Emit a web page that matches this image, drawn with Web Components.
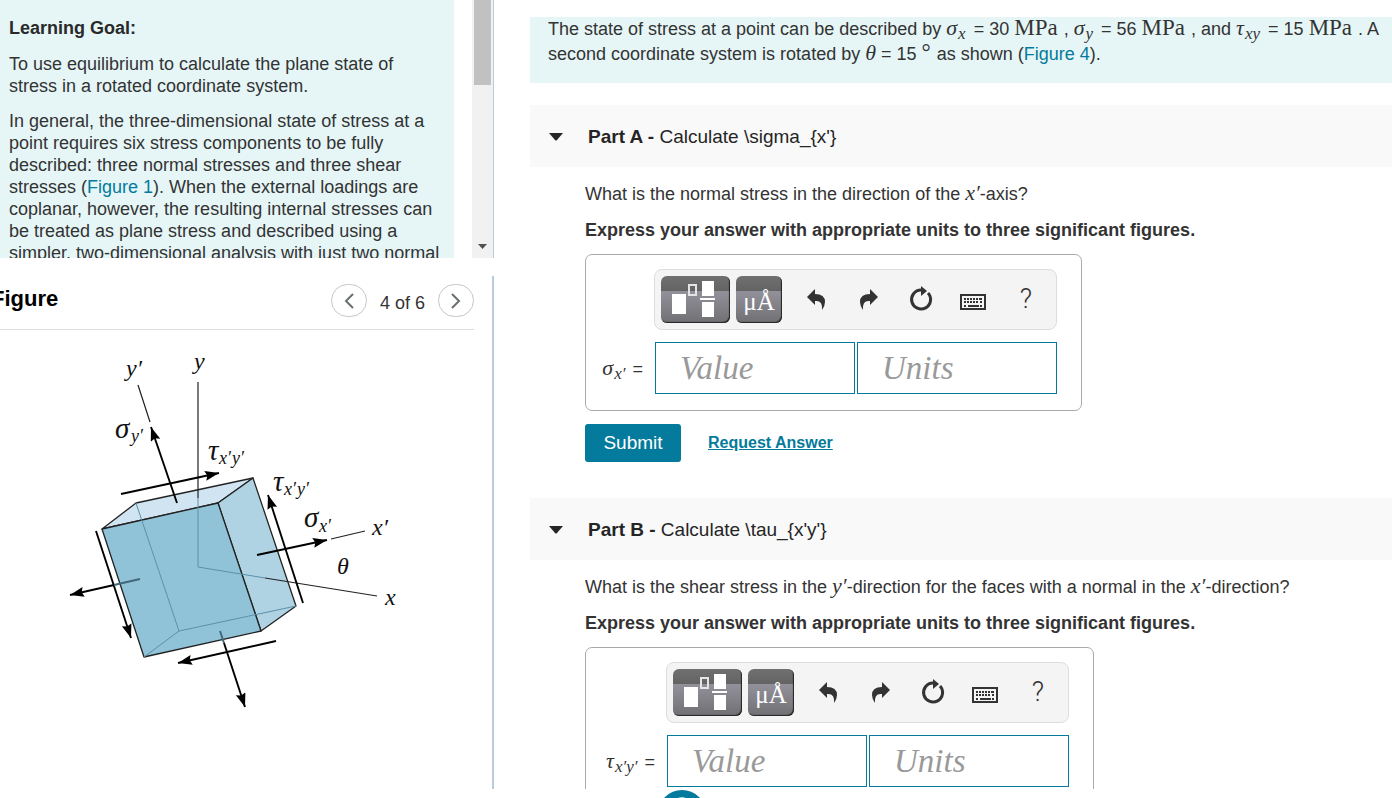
<!DOCTYPE html>
<html lang="en">
<head>
<meta charset="utf-8">
<title>Plane stress transformation</title>
<style>
    html, body { height: 100%; }
    body {
        margin: 0;
        overflow: hidden;
        background: #fff;
        color: #333;
        font: 18px/22px "Liberation Sans", Arial, sans-serif;
    }
    b { color: #2a2a2a; }
    a { color: #047a9c; text-decoration: none; }
    p { margin: 0 0 13px; }
    p:first-child { margin-bottom: 14px; }
</style>
</head>
<body>
<app-layout>
    <side-panel slot="side">
        <learning-goal>
            <p><b>Learning Goal:</b></p>
            <p>To use equilibrium to calculate the plane state of stress in a rotated coordinate system.</p>
            <p>In general, the three-dimensional state of stress at a point requires six stress components to be fully described: three normal stresses and three shear stresses (<a href="#fig1">Figure 1</a>). When the external loadings are coplanar, however, the resulting internal stresses can be treated as plane stress and described using a simpler, two-dimensional analysis with just two normal</p>
        </learning-goal>
        <figure-viewer current="4" total="6"><stress-figure></stress-figure></figure-viewer>
    </side-panel>

    <problem-intro>The state of stress at a point can be described by <math-var base="σ" sub="x"></math-var> = 30 <math-unit>MPa</math-unit> , <math-var base="σ" sub="y"></math-var> = 56 <math-unit>MPa</math-unit> , and <math-var base="τ" sub="xy"></math-var> = 15 <math-unit>MPa</math-unit> . A second coordinate system is rotated by <math-var base="θ"></math-var> = 15 <math-unit>°</math-unit> as shown (<a href="#fig4">Figure 4</a>).</problem-intro>

    <problem-part name="Part A" topic="Calculate \sigma_{x'}">
        <span slot="question">What is the normal stress in the direction of the <math-var base="x′"></math-var>-axis?</span>
        <answer-box slot="answer" base="σ" sub="x′" style="--label-width: 53px"></answer-box>
    </problem-part>
    <problem-part name="Part B" topic="Calculate \tau_{x'y'}">
        <span slot="question">What is the shear stress in the <math-var base="y′"></math-var>-direction for the faces with a normal in the <math-var base="x′"></math-var>-direction?</span>
        <answer-box slot="answer" base="τ" sub="x′y′" style="--label-width: 65px"></answer-box>
    </problem-part>
</app-layout>

<script>
// small helper so every element gets its own open root
function attach(el, html) {
    el.attachShadow({ mode: "open" }).innerHTML = html;
}

class AppLayout extends HTMLElement {
    connectedCallback() {
        attach(this, `
            <style>
                :host {
                    display: grid;
                    grid-template-columns: 494px minmax(0, 1fr);
                    height: 100%;
                    position: relative;
                    overflow: hidden;
                }
                aside, main { margin-bottom: 9px; overflow: hidden; min-height: 0; }
                main { padding: 17px 0 0 36px; }
                .brand {
                    position: absolute;
                    left: 49%;
                    top: calc(100% - 8px);
                    margin-left: -24px;
                    display: block;
                }
            </style>
            <aside><slot name="side"></slot></aside>
            <main><slot></slot></main>
            <svg class="brand" width="48" height="48" viewBox="0 0 48 48" aria-hidden="true">
                <circle cx="24" cy="24" r="24" fill="#047a9c"/>
                <path d="M18 40V10q12-4 14 6t-13 12" fill="none" stroke="#fff" stroke-width="3"/>
            </svg>
        `);
    }
}

class SidePanel extends HTMLElement {
    connectedCallback() {
        attach(this, `
            <style>
                :host { display: flex; flex-direction: column; height: 100%; }
            </style>
            <slot></slot>
        `);
    }
}

class LearningGoal extends HTMLElement {
    connectedCallback() {
        attach(this, `
            <style>
                :host {
                    display: flex;
                    flex: none;
                    height: 258px;
                    overflow: hidden;
                    border-right: 1px solid #b9cbdd;
                }
                .text {
                    flex: 1;
                    padding: 17px 14px 0 9px;
                    margin-right: 18px;
                    background: #e6f6f7;
                }
                .bar {
                    width: 17px;
                    padding: 0 2px;
                    background: #f1f1f1;
                    display: flex;
                    flex-direction: column;
                    justify-content: space-between;
                    align-items: center;
                }
                .thumb { width: 17px; height: 85px; background: #c1c1c1; }
                svg { display: block; margin-bottom: 9px; }
            </style>
            <div class="text"><slot></slot></div>
            <div class="bar">
                <div class="thumb"></div>
                <svg width="9" height="5" viewBox="0 0 9 5"><path d="M0 0h9L4.500 5z" fill="#505050"/></svg>
            </div>
        `);
    }
}

class FigureViewer extends HTMLElement {
    connectedCallback() {
        attach(this, `
            <style>
                :host {
                    display: block;
                    flex: 1;
                    margin-top: 18px;
                    border-right: 2px solid #b9cbdd;
                    overflow: hidden;
                }
                header {
                    display: flex;
                    align-items: center;
                    gap: 13px;
                    padding: 8px 0 12px;
                    margin-right: 18px;
                    border-bottom: 1px solid #ddd;
                }
                h2 {
                    flex: 1;
                    margin: 0 0 4px -9px;
                    color: #000;
                    font-size: 22px;
                    line-height: 28px;
                }
                button {
                    width: 36px;
                    height: 33px;
                    padding: 0;
                    border: 1px solid #c7c7c7;
                    border-radius: 18px;
                    background: #fff;
                    display: grid;
                    place-items: center;
                }
                span { padding-top: 4px; }
                path { fill: none; stroke: #6a7070; stroke-width: 2; }
            </style>
            <header>
                <h2>Figure</h2>
                <button aria-label="Previous figure"><svg width="10" height="16" viewBox="0 0 10 16"><path d="M9 1 2 8 9 15"/></svg></button>
                <span>${this.getAttribute("current")} of ${this.getAttribute("total")}</span>
                <button aria-label="Next figure"><svg width="10" height="16" viewBox="0 0 10 16"><path d="M1 1 8 8 1 15"/></svg></button>
            </header>
            <slot></slot>
        `);
    }
}

class StressFigure extends HTMLElement {
    connectedCallback() {
        attach(this, `
            <style>
                :host { display: block; padding: 9px 0 0 50px; }
                svg { display: block; }
                text { font: italic 24px "Liberation Serif", "Times New Roman", serif; fill: #111; }
                .g { font-size: 29px; }
                .s { font-size: 18px; }
                .thin { stroke: #222; stroke-width: 1.2; fill: none; }
                .face { stroke: #222; stroke-width: 1.3; stroke-linejoin: round; }
                .hid { stroke: #5b91a8; stroke-width: 1; fill: none; }
                .force { stroke: #000; stroke-width: 1.9; fill: none; marker-end: url(#head); }
            </style>
            <svg width="380" height="380" viewBox="0 0 380 380" role="img" aria-label="Rotated stress element">
                <defs>
                    <marker id="head" markerUnits="userSpaceOnUse" markerWidth="16" markerHeight="12" refX="14" refY="5" orient="auto">
                        <path d="M0 0 14 5 0 10 2 5z" fill="#000"/>
                    </marker>
                </defs>
                <path class="face" d="M52 190 86 164 203 139 168 164z" fill="#d1e4f1"/>
                <path class="face" d="M168 164 203 139 246 267 211 292z" fill="#afd3e2"/>
                <path class="face" d="M52 190 168 164 211 292 94 318z" fill="#91c3d8"/>
                <path class="hid" d="M86 164 129 292 94 318M129 292 246 267"/>
                <path class="thin" d="M88 46 100 83M148 43V159M281 200 315 192M215 239 327 257"/>
                <path class="hid" d="M148 159V228L215 239"/>
                <path class="force" d="M127 164 101 88"/>
                <path class="force" d="M71 155 169 134"/>
                <path class="force" d="M253 264 218 156"/>
                <path class="force" d="M207 216 277 201"/>
                <path class="force" d="M46 192 81 299"/>
                <path class="force" d="M226 302 128 324"/>
                <path d="M90 240 64 246M170 292 174 304" fill="none" stroke="#41687a" stroke-width="2"/>
                <path class="force" d="M64 246 20 256"/>
                <path class="force" d="M174 304 195 368"/>
                <text x="76" y="37">y′</text>
                <text x="144" y="30">y</text>
                <text class="g" x="65" y="99">σ</text><text class="s" x="81" y="103">y′</text>
                <text class="g" x="158" y="121">τ</text><text class="s" x="169" y="125">x′</text><text class="s" x="182" y="125">y′</text>
                <text class="g" x="223" y="152">τ</text><text class="s" x="234" y="156">x′</text><text class="s" x="247" y="156">y′</text>
                <text class="g" x="254" y="188">σ</text><text class="s" x="269" y="193">x′</text>
                <text x="322" y="196">x′</text>
                <text x="287" y="235">θ</text>
                <text x="335" y="266">x</text>
            </svg>
        `);
    }
}

class MathVar extends HTMLElement {
    connectedCallback() {
        const sub = this.getAttribute("sub");
        attach(this, `
            <style>
                :host {
                    display: inline;
                    font: italic 22px/22px "Liberation Serif", "Times New Roman", serif;
                }
                sub { font-size: 17px; line-height: 0; vertical-align: -4px; padding: 0 3px 0 1px; }
            </style>${this.getAttribute("base")}${sub ? `<sub>${sub}</sub>` : ""}`);
    }
}

class MathUnit extends HTMLElement {
    connectedCallback() {
        attach(this, `
            <style>
                :host {
                    display: inline;
                    padding-right: 1px;
                    font: 23px/22px "Liberation Serif", "Times New Roman", serif;
                }
            </style><slot></slot>`);
    }
}

class ProblemIntro extends HTMLElement {
    connectedCallback() {
        attach(this, `
            <style>
                :host {
                    display: block;
                    padding: 0 0 16px 18px;
                    margin-bottom: 22px;
                    background: #e6f6f7;
                    line-height: 25px;
                }
            </style>
            <slot></slot>
        `);
    }
}

class ProblemPart extends HTMLElement {
    connectedCallback() {
        attach(this, `
            <style>
                :host { display: block; margin-bottom: 36px; color: #333; }
                header {
                    display: flex;
                    align-items: center;
                    gap: 24px;
                    height: 62px;
                    padding: 2px 18px 0;
                    box-sizing: border-box;
                    background: #f9f9f9;
                    color: #252525;
                }
                h3 { margin: 0; font-size: 19px; font-weight: 400; }
                b { font-weight: 700; }
                header button { border: 0; padding: 0; background: none; width: 16px; display: grid; }
                .body { padding: 15px 0 0 55px; }
                p { margin: 0 0 13px; }
                .ask { margin-bottom: 14px; }
                .actions { display: flex; align-items: center; gap: 27px; margin-top: 13px; }
                .submit {
                    width: 96px;
                    height: 38px;
                    border: 0;
                    border-radius: 3px;
                    padding: 0;
                    background: #047a9c;
                    color: #fff;
                    font: 19px/22px "Liberation Sans", Arial, sans-serif;
                }
                a { color: #047a9c; font-size: 16px; font-weight: 700; }
            </style>
            <header>
                <button aria-label="Collapse"><svg width="16" height="8" viewBox="0 0 16 8"><path d="M1 0h14L9 7q-1 1-2 0z" fill="#252525"/></svg></button>
                <h3><b>${this.getAttribute("name")} - </b>${this.getAttribute("topic")}</h3>
            </header>
            <div class="body">
                <p class="ask"><slot name="question"></slot></p>
                <p><b>Express your answer with appropriate units to three significant figures.</b></p>
                <slot name="answer"></slot>
                <div class="actions">
                    <button class="submit">Submit</button>
                    <a href="#answer">Request Answer</a>
                </div>
            </div>
        `);
    }
}

class AnswerToolbar extends HTMLElement {
    connectedCallback() {
        attach(this, `
            <style>
                :host {
                    display: flex;
                    align-items: center;
                    box-sizing: border-box;
                    width: 403px;
                    height: 61px;
                    padding: 0 4px 0 6px;
                    border: 1px solid #ddd;
                    border-radius: 8px;
                    background: #f4f4f4;
                }
                button { padding: 0; border: 0; background: none; color: #333; display: grid; place-items: center; }
                .dark {
                    width: 69px;
                    height: 47px;
                    margin-right: 6px;
                    border-radius: 6px;
                    background: linear-gradient(#707070, #636363 32%, #92919b 33%, #707073);
                    box-shadow: inset -1px -1px 1px #222;
                    color: #fff;
                }
                .units { width: 46px; margin-right: 8px; padding-top: 3px; font: 25px/25px "Liberation Serif", "Times New Roman", serif; }
                .tool { flex: 1; height: 47px; font: 300 27px/27px Roboto, "Liberation Sans", sans-serif; }
                svg { display: block; }
            </style>
            <button class="dark" aria-label="Templates">
                <svg width="69" height="47" viewBox="0 0 69 47" fill="#fff">
                    <path d="M11 18h14v20H11zM41 5h12v15H41zM41 26h12v15H41zM39 22h15v2H39z"/>
                    <path d="M28 9h7v10h-7z" fill="none" stroke="#e4e4e4" stroke-width="2"/>
                </svg>
            </button>
            <button class="dark units" aria-label="Units">μÅ</button>
            <button class="tool" aria-label="Undo">
                <svg width="20" height="26" viewBox="0 0 20 26"><path d="M1 10 9 2v5q10 0 10 8 0 4-3 8 1-10-7-9v4z" fill="#333"/></svg>
            </button>
            <button class="tool" aria-label="Redo">
                <svg width="20" height="26" viewBox="0 0 20 26"><path d="M19 10 11 2v5Q1 7 1 15q0 4 3 8-1-10 7-9v4z" fill="#333"/></svg>
            </button>
            <button class="tool" aria-label="Reset">
                <svg width="24" height="28" viewBox="0 0 24 28"><path d="M19 7a9.500 9.500 0 1 1-7-3" fill="none" stroke="#333" stroke-width="3"/><path d="M12 0 18 5 12 10z" fill="#333"/></svg>
            </button>
            <button class="tool" aria-label="Keyboard">
                <svg width="28" height="20" viewBox="0 0 28 20"><path d="M2 5h24v14H2z" fill="none" stroke="#333" stroke-width="2"/>
                <path d="M5 9h18M5 12h15M22 8v5" stroke="#333" stroke-width="2" stroke-dasharray="2 1" fill="none"/><path d="M5 16h2M9 16h11M21 16h2" stroke="#333" stroke-width="2"/></svg>
            </button>
            <button class="tool" aria-label="Help">?</button>
        `);
    }
}

class AnswerBox extends HTMLElement {
    connectedCallback() {
        attach(this, `
            <style>
                :host {
                    display: grid;
                    grid-template-columns: var(--label-width) 403px;
                    row-gap: 12px;
                    align-items: center;
                    width: max-content;
                    padding: 14px 24px 16px 15px;
                    border: 1px solid #aaa;
                    border-radius: 7px;
                }
                answer-toolbar { grid-column: 2; }
                label { white-space: nowrap; padding-right: 11px; text-align: right; }
                math-var { margin-right: 4px; }
                .fields { display: grid; grid-template-columns: 1fr 1fr; gap: 2px; padding-left: 1px; }
                input {
                    box-sizing: border-box;
                    width: 100%;
                    height: 52px;
                    padding: 0 24px;
                    border: 1px solid #047a9c;
                    border-radius: 0;
                    font: italic 33px/36px "Liberation Serif", "Times New Roman", serif;
                }
                input::placeholder { color: #999; opacity: 1; }
            </style>
            <answer-toolbar></answer-toolbar>
            <label for="value"><math-var base="${this.getAttribute("base")}" sub="${this.getAttribute("sub")}"></math-var>=</label>
            <div class="fields">
                <input id="value" placeholder="Value">
                <input aria-label="Units" placeholder="Units">
            </div>
        `);
    }
}

customElements.define("math-var", MathVar);
customElements.define("math-unit", MathUnit);
customElements.define("answer-toolbar", AnswerToolbar);
customElements.define("answer-box", AnswerBox);
customElements.define("problem-intro", ProblemIntro);
customElements.define("problem-part", ProblemPart);
customElements.define("stress-figure", StressFigure);
customElements.define("figure-viewer", FigureViewer);
customElements.define("learning-goal", LearningGoal);
customElements.define("side-panel", SidePanel);
customElements.define("app-layout", AppLayout);
</script>
</body>
</html>
